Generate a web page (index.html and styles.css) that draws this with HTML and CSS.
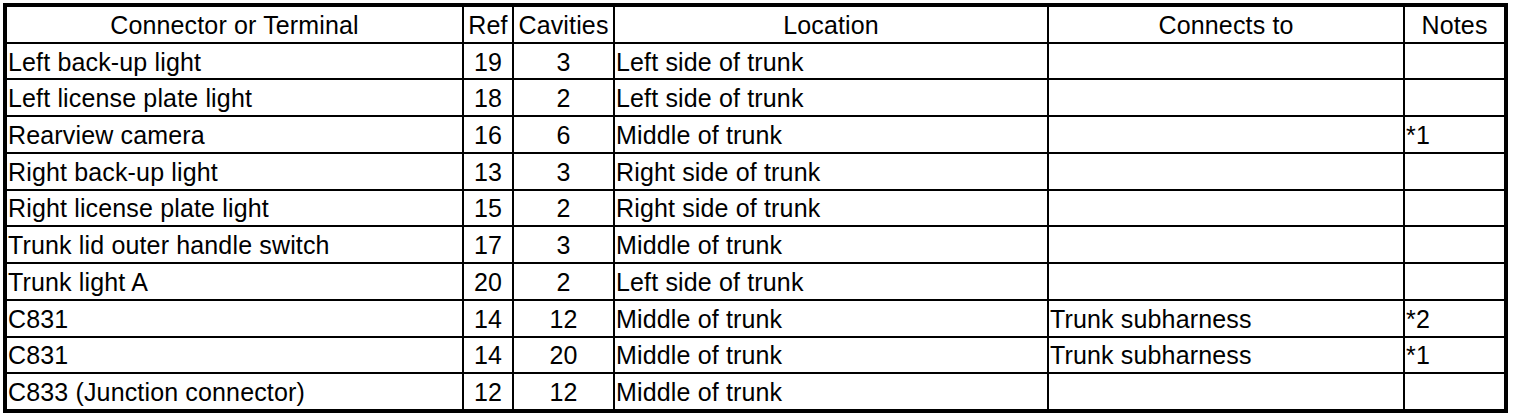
FILE: index.html
```html
<!DOCTYPE html>
<html lang="en">
<head>
<meta charset="utf-8">
<title>Connectors</title>
<link rel="stylesheet" href="styles.css">
</head>
<body>
<div class="grid">
  <div class="c h">Connector or Terminal</div><div class="c h">Ref</div><div class="c h">Cavities</div><div class="c h">Location</div><div class="c h">Connects to</div><div class="c h">Notes</div>

  <div class="c">Left back-up light</div><div class="c n">19</div><div class="c n">3</div><div class="c">Left side of trunk</div><div class="c"></div><div class="c"></div>
  <div class="c">Left license plate light</div><div class="c n">18</div><div class="c n">2</div><div class="c">Left side of trunk</div><div class="c"></div><div class="c"></div>
  <div class="c">Rearview camera</div><div class="c n">16</div><div class="c n">6</div><div class="c">Middle of trunk</div><div class="c"></div><div class="c">*1</div>
  <div class="c">Right back-up light</div><div class="c n">13</div><div class="c n">3</div><div class="c">Right side of trunk</div><div class="c"></div><div class="c"></div>
  <div class="c">Right license plate light</div><div class="c n">15</div><div class="c n">2</div><div class="c">Right side of trunk</div><div class="c"></div><div class="c"></div>
  <div class="c">Trunk lid outer handle switch</div><div class="c n">17</div><div class="c n">3</div><div class="c">Middle of trunk</div><div class="c"></div><div class="c"></div>
  <div class="c">Trunk light A</div><div class="c n">20</div><div class="c n">2</div><div class="c">Left side of trunk</div><div class="c"></div><div class="c"></div>
  <div class="c">C831</div><div class="c n">14</div><div class="c n">12</div><div class="c">Middle of trunk</div><div class="c">Trunk subharness</div><div class="c">*2</div>
  <div class="c">C831</div><div class="c n">14</div><div class="c n">20</div><div class="c">Middle of trunk</div><div class="c">Trunk subharness</div><div class="c">*1</div>
  <div class="c">C833 (Junction connector)</div><div class="c n">12</div><div class="c n">12</div><div class="c">Middle of trunk</div><div class="c"></div><div class="c"></div>
</div>
</body>
</html>
```
FILE: styles.css
```css
html, body {
  margin: 0;
  padding: 0;
  background: #fff;
}
body {
  padding: 3px;
  font-family: "Liberation Sans", Arial, sans-serif;
  font-size: 25px;
  letter-spacing: 0.15px;
  color: #000;
}
.grid {
  box-sizing: border-box;
  width: 1505px;
  height: 410px;
  display: grid;
  grid-template-columns: 455px 48px 99px 432px 354px 99px;
  grid-auto-rows: 1fr;
  gap: 2px;
  padding: 4px;
  background: #000;
}
.c {
  background: #fff;
  display: flex;
  align-items: center;
  padding: 2px 1px 0;
  white-space: nowrap;
  overflow: hidden;
  line-height: 1;
}
.h, .n {
  justify-content: center;
}
```
